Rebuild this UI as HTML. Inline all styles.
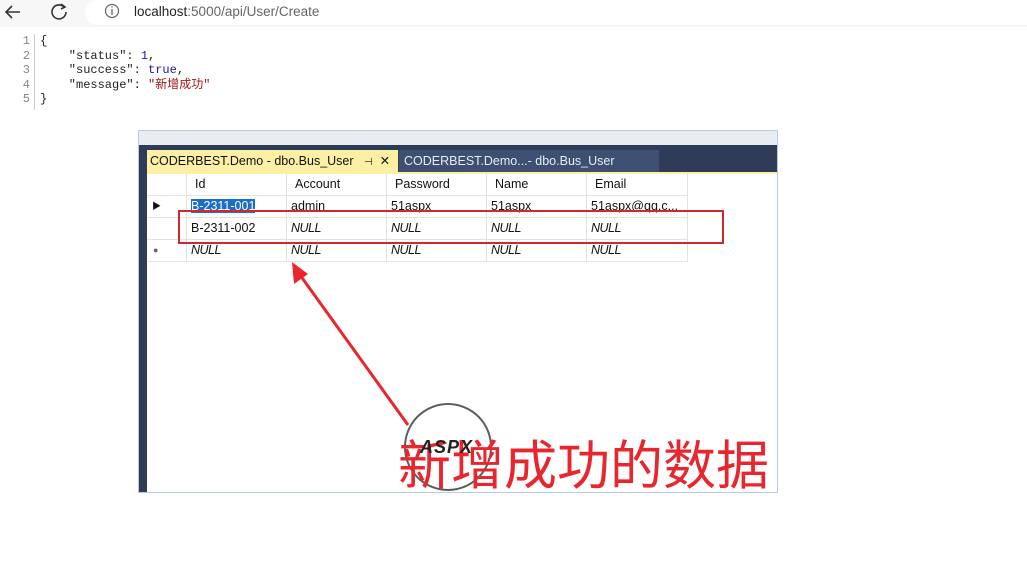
<!DOCTYPE html>
<html><head><meta charset="utf-8"><style>
body{margin:0;width:1027px;height:578px;background:#fff;position:relative;overflow:hidden;font-family:"Liberation Sans","Noto Sans CJK SC",sans-serif}
.abs{position:absolute}
.top{left:0;top:0;width:1027px;height:27px;background:#f7f7f7}
.url{left:85px;top:0;width:942px;height:25px;background:#fff;border-radius:13px 0 0 13px}
.code{font-family:"Liberation Mono","Noto Sans CJK SC",monospace;font-size:12px;line-height:14.5px;color:#222}
.ln{left:14px;top:34px;color:#888;text-align:right;width:16px}
.cell{position:absolute;font-size:12.5px;color:#111;line-height:21px;padding-left:4px;box-sizing:border-box;border-right:1px solid #e3e3e3;border-bottom:1px solid #e3e3e3;height:22px;white-space:nowrap;overflow:hidden}
.i{font-style:italic;letter-spacing:-0.5px}
</style></head><body>
<div class="abs top"></div>
<div class="abs url"></div>
<svg class="abs" style="left:0;top:0" width="120" height="27">
<path d="M20 12H7M12 6l-6 6 6 6" stroke="#333" stroke-width="1.6" fill="none"/>
<path d="M64 7a7 7 0 1 0 2 5" stroke="#333" stroke-width="1.6" fill="none"/><path d="M61 4l4 3-4 2" stroke="#333" stroke-width="1.6" fill="none"/>
<circle cx="112" cy="11" r="6.5" stroke="#666" stroke-width="1.2" fill="none"/><path d="M112 9v6M112 6.5v1" stroke="#666" stroke-width="1.3"/>
</svg>
<div class="abs" style="left:134px;top:4px;font-size:13.5px;color:#222">localhost<span style="color:#666">:5000/api/User/Create</span></div>
<div class="abs code ln">1<br>2<br>3<br>4<br>5</div>
<div class="abs" style="left:34px;top:34px;width:1px;height:76px;background:#ccc"></div>
<div class="abs code" style="left:40px;top:34px">{<br>&nbsp;&nbsp;&nbsp;&nbsp;″status″: <span style="color:#1a1aa6">1</span>,<br>&nbsp;&nbsp;&nbsp;&nbsp;″success″: <span style="color:#1a1aa6">true</span>,<br>&nbsp;&nbsp;&nbsp;&nbsp;″message″: <span style="color:#a31515">″新增成功″</span><br>}</div>

<div class="abs" style="left:138px;top:130px;width:640px;height:363px;background:#fff;border:1px solid #b9cbe4;box-sizing:border-box"></div>
<div class="abs" style="left:139px;top:131px;width:638px;height:14px;background:#e9edf3"></div>
<div class="abs" style="left:139px;top:145px;width:638px;height:28px;background:#2e3c57"></div>
<div class="abs" style="left:139px;top:145px;width:8px;height:347px;background:#2e3c57"></div>
<div class="abs" style="left:147px;top:150px;width:251px;height:23px;background:#fdf0a4;font-size:12.5px;line-height:23px;color:#111;padding-left:3px;box-sizing:border-box;white-space:nowrap">CODERBEST.Demo - dbo.Bus_User&nbsp;&nbsp;&nbsp;<span style="font-size:10px">⊣</span>&nbsp;&nbsp;✕</div>
<div class="abs" style="left:399px;top:150px;width:260px;height:22px;background:#3d5071;font-size:12.5px;line-height:22px;color:#e8ecf2;padding-left:5px;box-sizing:border-box;white-space:nowrap">CODERBEST.Demo...- dbo.Bus_User</div>
<div class="abs" style="left:147px;top:172px;width:630px;height:2px;background:#fdf0a4"></div>

<div class="cell" style="left:147px;top:174px;width:40px"></div>
<div class="cell" style="left:187px;top:174px;width:100px;padding-left:8px">Id</div>
<div class="cell" style="left:287px;top:174px;width:100px;padding-left:8px">Account</div>
<div class="cell" style="left:387px;top:174px;width:100px;padding-left:8px">Password</div>
<div class="cell" style="left:487px;top:174px;width:100px;padding-left:8px">Name</div>
<div class="cell" style="left:587px;top:174px;width:101px;padding-left:8px">Email</div>

<div class="cell" style="left:147px;top:196px;width:40px;font-size:9px;padding-left:5px">▶</div>
<div class="cell" style="left:187px;top:196px;width:100px"><span style="background:#1c6fc9;color:#fff">B-2311-001</span></div>
<div class="cell" style="left:287px;top:196px;width:100px">admin</div>
<div class="cell" style="left:387px;top:196px;width:100px">51aspx</div>
<div class="cell" style="left:487px;top:196px;width:100px">51aspx</div>
<div class="cell" style="left:587px;top:196px;width:101px">51aspx@qq.c...</div>

<div class="cell" style="left:147px;top:218px;width:40px"></div>
<div class="cell" style="left:187px;top:218px;width:100px">B-2311-002</div>
<div class="cell i" style="left:287px;top:218px;width:100px">NULL</div>
<div class="cell i" style="left:387px;top:218px;width:100px">NULL</div>
<div class="cell i" style="left:487px;top:218px;width:100px">NULL</div>
<div class="cell i" style="left:587px;top:218px;width:101px">NULL</div>

<div class="cell" style="left:147px;top:240px;width:40px;font-size:9px;padding-left:6px;color:#666">●</div>
<div class="cell i" style="left:187px;top:240px;width:100px">NULL</div>
<div class="cell i" style="left:287px;top:240px;width:100px">NULL</div>
<div class="cell i" style="left:387px;top:240px;width:100px">NULL</div>
<div class="cell i" style="left:487px;top:240px;width:100px">NULL</div>
<div class="cell i" style="left:587px;top:240px;width:101px">NULL</div>

<div class="abs" style="left:178px;top:210px;width:546px;height:34px;border:2px solid #d0282e;box-sizing:border-box"></div>

<svg class="abs" style="left:0;top:0" width="1027" height="578">
<line x1="408" y1="425" x2="300" y2="275" stroke="#e8262d" stroke-width="3"/>
<path d="M292 262l2 22 14-10z" fill="#e8262d"/>
<circle cx="448" cy="447" r="43" stroke="#333" stroke-width="2" fill="none" opacity="0.8"/>
</svg>
<div class="abs" style="left:398px;top:430px;font-size:53px;line-height:64px;color:#e8262d;font-family:'Noto Sans CJK SC',sans-serif">新增成功的数据</div>
<div class="abs" style="left:420px;top:437px;font-size:18px;font-weight:bold;color:#222;letter-spacing:1px;font-style:italic">ASPX</div>
</body></html>
